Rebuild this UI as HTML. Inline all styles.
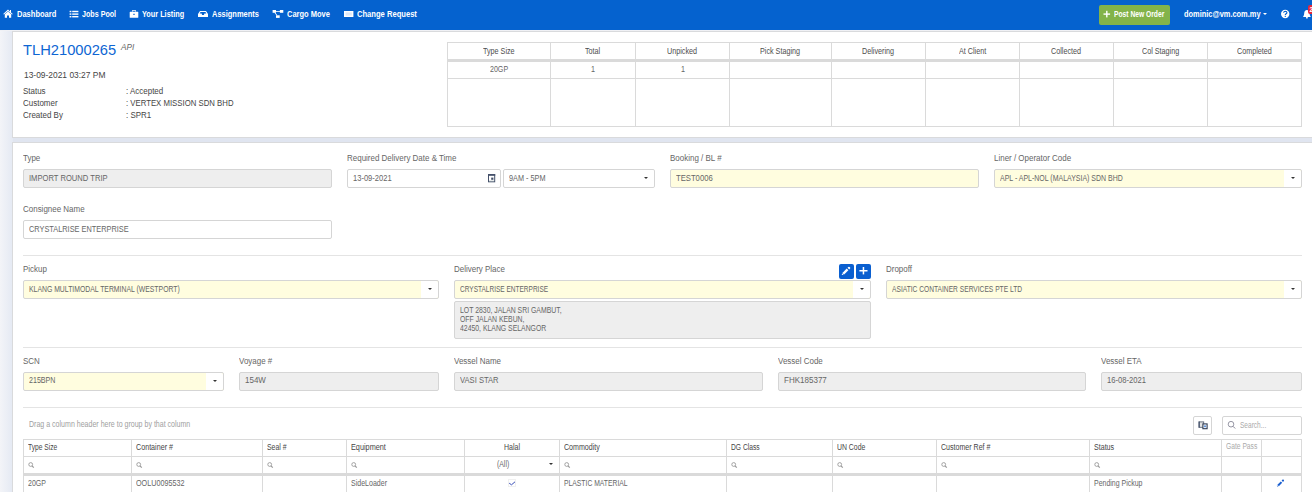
<!DOCTYPE html>
<html><head><meta charset="utf-8">
<style>
*{box-sizing:border-box;margin:0;padding:0}
html,body{width:1312px;height:492px;overflow:hidden}
body{position:relative;background:#e0e5f0;font-family:"Liberation Sans",sans-serif;color:#555}
.a{position:absolute}
.tx{position:absolute;white-space:nowrap;transform-origin:0 0}
.card{position:absolute;background:#fff;border:1px solid #d9dadc;border-right:none}
.inp{position:absolute;border:1px solid #d5d5d5;border-radius:2px;background:#fff;height:19px}
.dis{background:#eeeeee}
.yel{background:#fffddf}
.selbtn{position:absolute;right:0;top:0;width:17px;height:17px;background:#fff;border-radius:0 2px 2px 0}
.car{position:absolute;width:0;height:0;border-left:2px solid transparent;border-right:2px solid transparent;border-top:2px solid #333}
.hl{position:absolute;height:1px;background:#e4e4e4}
.vl{position:absolute;width:1px;background:#dadada}
</style></head><body>
<div class="a" style="left:0;top:31px;width:13px;height:461px;background:linear-gradient(90deg,#f3f4f8,#e4e9f3)"></div>
<div class="a" style="left:0;top:0;width:1312px;height:30px;background:#0562cf"></div>
<div class="a" style="left:0;top:30px;width:1312px;height:1px;background:#f0f1f5"></div>

<svg class="a" style="left:3px;top:9px" width="10" height="9" viewBox="0 0 10 9">
<path d="M5 0.6 L0.2 5 L1 5.6 L5 2 L9 5.6 L9.8 5 L8 3.4 L8 1 L7 1 L7 2.5 Z" fill="#fff"/>
<path d="M1.8 5.2 L5 2.4 L8.2 5.2 L8.2 8.8 L6 8.8 L6 6.4 L4 6.4 L4 8.8 L1.8 8.8 Z" fill="#fff"/>
</svg>
<svg class="a" style="left:69px;top:10px" width="10" height="8" viewBox="0 0 10 8">
<rect x="0.6" y="0.8" width="1.8" height="1.4" fill="#fff"/><rect x="3.2" y="0.8" width="6.2" height="1.4" fill="#fff"/>
<rect x="0.6" y="3.4" width="1.8" height="1.4" fill="#fff"/><rect x="3.2" y="3.4" width="6.2" height="1.4" fill="#fff"/>
<rect x="0.6" y="6" width="1.8" height="1.4" fill="#fff"/><rect x="3.2" y="6" width="6.2" height="1.4" fill="#fff"/>
</svg>
<svg class="a" style="left:129px;top:10px" width="10" height="8" viewBox="0 0 10 8">
<path d="M3 0.2 H7 V1.6 H6 V1 H4 V1.6 H3 Z" fill="#fff"/>
<rect x="0.7" y="1.8" width="8.6" height="6" rx="0.6" fill="#fff"/>
<rect x="4.2" y="3.8" width="1.6" height="1" fill="#0562cf"/>
</svg>
<svg class="a" style="left:197px;top:10px" width="12" height="8" viewBox="0 0 12 8">
<path d="M3 1 H9 L11 4 V7 H1 V4 Z" fill="#fff"/>
<path d="M3.5 2 H8.5 L9.3 3.5 H7.4 L6.9 4.9 H5.1 L4.6 3.5 H2.7 Z" fill="#0562cf"/>
</svg>
<svg class="a" style="left:272px;top:9px" width="12" height="10" viewBox="0 0 12 10">
<rect x="0.6" y="1" width="3.4" height="2.8" fill="#fff"/>
<rect x="7.9" y="1" width="3.4" height="2.8" fill="#fff"/>
<rect x="4" y="6.3" width="3.7" height="2.6" fill="#fff"/>
<path d="M4 2 H8 V2.8 H4 Z" fill="#fff"/>
<path d="M2.2 3.6 L4.6 6.6 L5.4 6.2 L3.2 3.4 Z" fill="#fff"/>
</svg>
<svg class="a" style="left:343px;top:10px" width="12" height="8" viewBox="0 0 12 8">
<rect x="1" y="1" width="9.4" height="6" fill="#fff"/>
<rect x="2.6" y="2.4" width="6.2" height="3.2" fill="#dfe9f8"/>
</svg>
<div class="tx" style="left:16.50px;top:10px;font-size:8.4px;line-height:8.4px;color:#fff;font-weight:700;transform:scaleX(0.8984);">Dashboard</div>
<div class="tx" style="left:82.00px;top:10px;font-size:8.4px;line-height:8.4px;color:#fff;font-weight:700;transform:scaleX(0.8521);">Jobs Pool</div>
<div class="tx" style="left:142.20px;top:10px;font-size:8.4px;line-height:8.4px;color:#fff;font-weight:700;transform:scaleX(0.8729);">Your Listing</div>
<div class="tx" style="left:212.00px;top:10px;font-size:8.4px;line-height:8.4px;color:#fff;font-weight:700;transform:scaleX(0.8918);">Assignments</div>
<div class="tx" style="left:287.10px;top:10px;font-size:8.4px;line-height:8.4px;color:#fff;font-weight:700;transform:scaleX(0.8950);">Cargo Move</div>
<div class="tx" style="left:357.30px;top:10px;font-size:8.4px;line-height:8.4px;color:#fff;font-weight:700;transform:scaleX(0.9065);">Change Request</div>
<div class="a" style="left:1099px;top:5px;width:71px;height:20px;background:#83b34a;border-radius:2px"></div>
<svg class="a" style="left:1103px;top:10px" width="8" height="8" viewBox="0 0 8 8"><rect x="3.1" y="0.8" width="1.4" height="6.6" fill="#fff"/><rect x="0.5" y="3.4" width="6.6" height="1.4" fill="#fff"/></svg>
<div class="tx" style="left:1114.30px;top:10px;font-size:8.4px;line-height:8.4px;color:#fff;font-weight:700;transform:scaleX(0.8006);">Post New Order</div>
<div class="tx" style="left:1183.50px;top:10px;font-size:8.4px;line-height:8.4px;color:#fff;font-weight:700;transform:scaleX(0.8859);">dominic@vm.com.my</div>
<div class="car" style="left:1262.5px;top:13px;border-left-width:2.2px;border-right-width:2.2px;border-top:2.2px solid #fff"></div>
<svg class="a" style="left:1280px;top:9px" width="11" height="11" viewBox="0 0 11 11"><circle cx="5.2" cy="5" r="4.2" fill="#fff"/><path d="M3.6 3.8 Q3.8 2.2 5.3 2.2 Q6.9 2.3 6.9 3.6 Q6.8 4.6 5.8 5 Q5.3 5.3 5.3 6" stroke="#0562cf" stroke-width="1.1" fill="none"/><rect x="4.7" y="6.8" width="1.2" height="1.1" fill="#0562cf"/></svg>
<svg class="a" style="left:1302px;top:9px" width="10" height="10" viewBox="0 0 10 10"><path d="M4.9 1 Q7.4 1.2 7.6 4.2 Q7.6 6.6 8.6 7.6 L8.6 8 H1.2 V7.6 Q2.2 6.6 2.2 4.2 Q2.4 1.2 4.9 1 Z" fill="#fff"/><circle cx="4.9" cy="8.7" r="0.9" fill="#fff"/></svg>
<div class="a" style="left:1307.5px;top:5px;width:7px;height:9px;background:#e3283c;border-radius:2px"></div>
<div class="tx" style="left:1309.5px;top:5.5px;font-size:6.5px;font-weight:700;color:#fff;line-height:8px">2</div>
<div class="card" style="left:12px;top:31px;width:1300px;height:107px"></div>
<div class="tx" style="left:22.90px;top:43px;font-size:14.6px;line-height:14.6px;color:#0e66d3;transform:scaleX(1.0076);">TLH21000265</div>
<div class="tx" style="left:121.20px;top:43px;font-size:8.5px;line-height:8.5px;color:#666;font-style:italic;transform:scaleX(0.9635);">API</div>
<div class="tx" style="left:23.60px;top:71px;font-size:8.4px;line-height:8.4px;color:#454545;transform:scaleX(1.0048);">13-09-2021 03:27 PM</div>
<div class="tx" style="left:23.20px;top:87px;font-size:8.4px;line-height:8.4px;color:#454545;transform:scaleX(0.9520);">Status</div>
<div class="tx" style="left:125.90px;top:87px;font-size:8.4px;line-height:8.4px;color:#454545;transform:scaleX(0.9520);">: Accepted</div>
<div class="tx" style="left:23.20px;top:99px;font-size:8.4px;line-height:8.4px;color:#454545;transform:scaleX(0.9520);">Customer</div>
<div class="tx" style="left:125.90px;top:99px;font-size:8.4px;line-height:8.4px;color:#454545;transform:scaleX(0.9290);">: VERTEX MISSION SDN BHD</div>
<div class="tx" style="left:23.20px;top:111px;font-size:8.4px;line-height:8.4px;color:#454545;transform:scaleX(0.9520);">Created By</div>
<div class="tx" style="left:125.90px;top:111px;font-size:8.4px;line-height:8.4px;color:#454545;transform:scaleX(0.9520);">: SPR1</div>
<div class="a" style="left:447px;top:42px;width:855px;height:85px;border:1px solid #dadada"></div>
<div class="vl" style="left:550px;top:42px;height:84px"></div>
<div class="vl" style="left:635px;top:42px;height:84px"></div>
<div class="vl" style="left:729px;top:42px;height:84px"></div>
<div class="vl" style="left:831px;top:42px;height:84px"></div>
<div class="vl" style="left:925px;top:42px;height:84px"></div>
<div class="vl" style="left:1019px;top:42px;height:84px"></div>
<div class="vl" style="left:1113px;top:42px;height:84px"></div>
<div class="vl" style="left:1207px;top:42px;height:84px"></div>
<div class="a" style="left:447px;top:59px;width:855px;height:3px;background:#dadada"></div>
<div class="a" style="left:447px;top:78px;width:855px;height:1px;background:#dadada"></div>
<div class="tx" style="left:483.19px;top:47px;font-size:8.4px;line-height:8.4px;color:#4d4d4d;transform:scaleX(0.8600);">Type Size</div>
<div class="tx" style="left:585.39px;top:47px;font-size:8.4px;line-height:8.4px;color:#4d4d4d;transform:scaleX(0.8600);">Total</div>
<div class="tx" style="left:667.49px;top:47px;font-size:8.4px;line-height:8.4px;color:#4d4d4d;transform:scaleX(0.8600);">Unpicked</div>
<div class="tx" style="left:760.48px;top:47px;font-size:8.4px;line-height:8.4px;color:#4d4d4d;transform:scaleX(0.8600);">Pick Staging</div>
<div class="tx" style="left:862.49px;top:47px;font-size:8.4px;line-height:8.4px;color:#4d4d4d;transform:scaleX(0.8600);">Delivering</div>
<div class="tx" style="left:958.89px;top:47px;font-size:8.4px;line-height:8.4px;color:#4d4d4d;transform:scaleX(0.8600);">At Client</div>
<div class="tx" style="left:1051.49px;top:47px;font-size:8.4px;line-height:8.4px;color:#4d4d4d;transform:scaleX(0.8600);">Collected</div>
<div class="tx" style="left:1141.88px;top:47px;font-size:8.4px;line-height:8.4px;color:#4d4d4d;transform:scaleX(0.8600);">Col Staging</div>
<div class="tx" style="left:1237.08px;top:47px;font-size:8.4px;line-height:8.4px;color:#4d4d4d;transform:scaleX(0.8600);">Completed</div>
<div class="tx" style="left:489.95px;top:65px;font-size:8.4px;line-height:8.4px;color:#666;transform:scaleX(0.8452);">20GP</div>
<div class="tx" style="left:591.00px;top:65px;font-size:8.4px;line-height:8.4px;color:#666;transform:scaleX(0.8600);">1</div>
<div class="tx" style="left:680.50px;top:65px;font-size:8.4px;line-height:8.4px;color:#666;transform:scaleX(0.8600);">1</div>
<div class="card" style="left:12px;top:142px;width:1300px;height:360px"></div>
<div class="tx" style="left:23.00px;top:154px;font-size:8.4px;line-height:8.4px;color:#666;transform:scaleX(0.9520);">Type</div>
<div class="inp dis" style="left:23px;top:169px;width:309px;height:19px"></div>
<div class="tx" style="left:29.00px;top:174px;font-size:8.4px;line-height:8.4px;color:#666;transform:scaleX(0.9084);">IMPORT ROUND TRIP</div>
<div class="tx" style="left:346.50px;top:154px;font-size:8.4px;line-height:8.4px;color:#666;transform:scaleX(0.9520);">Required Delivery Date &amp; Time</div>
<div class="inp " style="left:347px;top:169px;width:154px;height:19px"></div>
<div class="tx" style="left:353.00px;top:174px;font-size:8.4px;line-height:8.4px;color:#666;transform:scaleX(0.9010);">13-09-2021</div>
<svg class="a" style="left:487px;top:173px" width="9" height="10" viewBox="0 0 9 10"><rect x="1.5" y="1.6" width="6.2" height="7.2" fill="none" stroke="#44506a" stroke-width="1"/><rect x="1" y="1.1" width="7.2" height="1.7" fill="#44506a"/><rect x="4.2" y="4.6" width="2.2" height="2.2" fill="#44506a"/><rect x="2" y="7.6" width="5.2" height="0.8" fill="#9aa" opacity="0.6"/></svg>
<div class="inp " style="left:503px;top:169px;width:152px;height:19px"><div class="selbtn"><div class="car" style="left:6.5px;top:7px"></div></div></div>
<div class="tx" style="left:509.00px;top:174px;font-size:8.4px;line-height:8.4px;color:#666;transform:scaleX(0.8715);">9AM - 5PM</div>
<div class="tx" style="left:670.00px;top:154px;font-size:8.4px;line-height:8.4px;color:#666;transform:scaleX(0.9520);">Booking / BL #</div>
<div class="inp yel" style="left:670px;top:169px;width:309px;height:19px"></div>
<div class="tx" style="left:676.00px;top:174px;font-size:8.4px;line-height:8.4px;color:#666;transform:scaleX(0.9167);">TEST0006</div>
<div class="tx" style="left:993.50px;top:154px;font-size:8.4px;line-height:8.4px;color:#666;transform:scaleX(0.9520);">Liner / Operator Code</div>
<div class="inp yel" style="left:994px;top:169px;width:308px;height:19px"><div class="selbtn"><div class="car" style="left:6.5px;top:7px"></div></div></div>
<div class="tx" style="left:1000.00px;top:174px;font-size:8.4px;line-height:8.4px;color:#666;transform:scaleX(0.8341);">APL - APL-NOL (MALAYSIA) SDN BHD</div>
<div class="tx" style="left:23.00px;top:205px;font-size:8.4px;line-height:8.4px;color:#666;transform:scaleX(0.9520);">Consignee Name</div>
<div class="inp " style="left:23px;top:220px;width:309px;height:19px"></div>
<div class="tx" style="left:29.00px;top:225px;font-size:8.4px;line-height:8.4px;color:#666;transform:scaleX(0.8795);">CRYSTALRISE ENTERPRISE</div>
<div class="hl" style="left:23px;top:255px;width:1279px"></div>
<div class="tx" style="left:23.00px;top:265px;font-size:8.4px;line-height:8.4px;color:#666;transform:scaleX(0.9520);">Pickup</div>
<div class="inp yel" style="left:23px;top:280px;width:416px;height:19px"><div class="selbtn"><div class="car" style="left:6.5px;top:7px"></div></div></div>
<div class="tx" style="left:29.00px;top:285px;font-size:8.4px;line-height:8.4px;color:#666;transform:scaleX(0.8189);">KLANG MULTIMODAL TERMINAL (WESTPORT)</div>
<div class="tx" style="left:454.00px;top:265px;font-size:8.4px;line-height:8.4px;color:#666;transform:scaleX(0.9520);">Delivery Place</div>
<div class="a" style="left:839px;top:264px;width:15px;height:15px;background:#0a5fd0;border-radius:2px"></div>
<svg class="a" style="left:839px;top:264px" width="15" height="15" viewBox="0 0 15 15"><path d="M3.4 8.9 L5.1 10.6 L9.4 6.3 L7.7 4.6 Z" fill="#fff"/><path d="M3.1 9.3 L2.8 11 L4.6 10.8 Z" fill="#fff"/><path d="M8.5 3.8 L9.4 2.9 Q10 2.4 10.6 3 L11.1 3.5 Q11.6 4.1 11.1 4.6 L10.2 5.5 Z" fill="#fff"/></svg>
<div class="a" style="left:856px;top:264px;width:15px;height:15px;background:#0a5fd0;border-radius:2px"></div>
<svg class="a" style="left:856px;top:264px" width="15" height="15" viewBox="0 0 15 15"><rect x="6.7" y="3" width="1.5" height="7.4" fill="#fff"/><rect x="3.4" y="6" width="8.1" height="1.5" fill="#fff"/></svg>
<div class="inp yel" style="left:454px;top:280px;width:417px;height:19px"><div class="selbtn"><div class="car" style="left:6.5px;top:7px"></div></div></div>
<div class="tx" style="left:460.00px;top:285px;font-size:8.4px;line-height:8.4px;color:#666;transform:scaleX(0.7780);">CRYSTALRISE ENTERPRISE</div>
<div class="inp dis" style="left:454px;top:301px;width:417px;height:38px"></div>
<div class="tx" style="left:460.10px;top:306px;font-size:8.4px;line-height:8.4px;color:#666;transform:scaleX(0.8215);">LOT 2830, JALAN SRI GAMBUT,</div>
<div class="tx" style="left:460.10px;top:315px;font-size:8.4px;line-height:8.4px;color:#666;transform:scaleX(0.8200);">OFF JALAN KEBUN,</div>
<div class="tx" style="left:460.10px;top:324px;font-size:8.4px;line-height:8.4px;color:#666;transform:scaleX(0.8200);">42450, KLANG SELANGOR</div>
<div class="tx" style="left:886.00px;top:265px;font-size:8.4px;line-height:8.4px;color:#666;transform:scaleX(0.9520);">Dropoff</div>
<div class="inp yel" style="left:886px;top:280px;width:416px;height:19px"><div class="selbtn"><div class="car" style="left:6.5px;top:7px"></div></div></div>
<div class="tx" style="left:892.00px;top:285px;font-size:8.4px;line-height:8.4px;color:#666;transform:scaleX(0.7944);">ASIATIC CONTAINER SERVICES PTE LTD</div>
<div class="hl" style="left:23px;top:347px;width:1279px"></div>
<div class="tx" style="left:23.00px;top:357px;font-size:8.4px;line-height:8.4px;color:#666;transform:scaleX(0.9520);">SCN</div>
<div class="inp yel" style="left:23px;top:372px;width:201px;height:19px"><div class="selbtn"><div class="car" style="left:6.5px;top:7px"></div></div></div>
<div class="tx" style="left:29.00px;top:376px;font-size:8.4px;line-height:8.4px;color:#666;transform:scaleX(0.8495);">215BPN</div>
<div class="tx" style="left:239.00px;top:357px;font-size:8.4px;line-height:8.4px;color:#666;transform:scaleX(0.9520);">Voyage #</div>
<div class="inp dis" style="left:239px;top:372px;width:200px;height:19px"></div>
<div class="tx" style="left:245.00px;top:376px;font-size:8.4px;line-height:8.4px;color:#666;transform:scaleX(0.9553);">154W</div>
<div class="tx" style="left:454.00px;top:357px;font-size:8.4px;line-height:8.4px;color:#666;transform:scaleX(0.9520);">Vessel Name</div>
<div class="inp dis" style="left:454px;top:372px;width:309px;height:19px"></div>
<div class="tx" style="left:460.00px;top:376px;font-size:8.4px;line-height:8.4px;color:#666;transform:scaleX(0.9082);">VASI STAR</div>
<div class="tx" style="left:778.00px;top:357px;font-size:8.4px;line-height:8.4px;color:#666;transform:scaleX(0.9520);">Vessel Code</div>
<div class="inp dis" style="left:778px;top:372px;width:308px;height:19px"></div>
<div class="tx" style="left:784.00px;top:376px;font-size:8.4px;line-height:8.4px;color:#666;transform:scaleX(0.9576);">FHK185377</div>
<div class="tx" style="left:1101.00px;top:357px;font-size:8.4px;line-height:8.4px;color:#666;transform:scaleX(0.9520);">Vessel ETA</div>
<div class="inp dis" style="left:1101px;top:372px;width:201px;height:19px"></div>
<div class="tx" style="left:1107.00px;top:376px;font-size:8.4px;line-height:8.4px;color:#666;transform:scaleX(0.9080);">16-08-2021</div>
<div class="hl" style="left:23px;top:407px;width:1279px"></div>
<div class="tx" style="left:29.10px;top:420px;font-size:8.4px;line-height:8.4px;color:#a0a0a0;transform:scaleX(0.8409);">Drag a column header here to group by that column</div>
<div class="inp" style="left:1193px;top:416px;width:19px;height:19px"></div>
<svg class="a" style="left:1197px;top:420px" width="12" height="11" viewBox="0 0 12 11"><rect x="2.1" y="1.9" width="4.6" height="5.4" fill="#e4e4e4" stroke="#5b6577" stroke-width="0.9"/><rect x="1.6" y="1.5" width="1.1" height="6.2" fill="#3b4a66"/><rect x="5.9" y="3.9" width="4.2" height="4.8" fill="#fff" stroke="#2f3c55" stroke-width="1.1"/><rect x="7.2" y="5.4" width="1.6" height="1.8" fill="#3a7bd5"/></svg>
<div class="inp" style="left:1222px;top:416px;width:80px;height:19px"></div>
<svg class="a" style="left:1227px;top:420px" width="10" height="10" viewBox="0 0 10 10"><circle cx="4" cy="4.2" r="2.8" fill="none" stroke="#8a8a9a" stroke-width="0.9"/><path d="M6 6.3 L8.2 8.5" stroke="#8a8a9a" stroke-width="1"/></svg>
<div class="tx" style="left:1240.20px;top:421px;font-size:8.4px;line-height:8.4px;color:#aaa;transform:scaleX(0.7817);">Search...</div>
<div class="a" style="left:23px;top:439px;width:1279px;height:60px;border:1px solid #dadada"></div>
<div class="vl" style="left:131px;top:439px;height:60px"></div>
<div class="vl" style="left:262px;top:439px;height:60px"></div>
<div class="vl" style="left:346px;top:439px;height:60px"></div>
<div class="vl" style="left:464px;top:439px;height:60px"></div>
<div class="vl" style="left:559px;top:439px;height:60px"></div>
<div class="vl" style="left:726px;top:439px;height:60px"></div>
<div class="vl" style="left:832px;top:439px;height:60px"></div>
<div class="vl" style="left:936px;top:439px;height:60px"></div>
<div class="vl" style="left:1089px;top:439px;height:60px"></div>
<div class="vl" style="left:1221px;top:439px;height:60px"></div>
<div class="vl" style="left:1261px;top:439px;height:60px"></div>
<div class="a" style="left:23px;top:456px;width:1279px;height:1px;background:#dadada"></div>
<div class="a" style="left:23px;top:473px;width:1279px;height:3px;background:#dadada"></div>
<div class="tx" style="left:27.50px;top:443px;font-size:8.4px;line-height:8.4px;color:#454545;transform:scaleX(0.7940);">Type Size</div>
<svg class="a" style="left:28px;top:462px" width="7" height="7" viewBox="0 0 7 7"><circle cx="2.7" cy="2.5" r="1.9" fill="none" stroke="#9a9a9a" stroke-width="0.9"/><path d="M4.1 4 L5.8 5.7" stroke="#9a9a9a" stroke-width="1.1"/></svg>
<div class="tx" style="left:135.50px;top:443px;font-size:8.4px;line-height:8.4px;color:#454545;transform:scaleX(0.8545);">Container #</div>
<svg class="a" style="left:136px;top:462px" width="7" height="7" viewBox="0 0 7 7"><circle cx="2.7" cy="2.5" r="1.9" fill="none" stroke="#9a9a9a" stroke-width="0.9"/><path d="M4.1 4 L5.8 5.7" stroke="#9a9a9a" stroke-width="1.1"/></svg>
<div class="tx" style="left:266.50px;top:443px;font-size:8.4px;line-height:8.4px;color:#454545;transform:scaleX(0.8254);">Seal #</div>
<svg class="a" style="left:267px;top:462px" width="7" height="7" viewBox="0 0 7 7"><circle cx="2.7" cy="2.5" r="1.9" fill="none" stroke="#9a9a9a" stroke-width="0.9"/><path d="M4.1 4 L5.8 5.7" stroke="#9a9a9a" stroke-width="1.1"/></svg>
<div class="tx" style="left:350.50px;top:443px;font-size:8.4px;line-height:8.4px;color:#454545;transform:scaleX(0.8700);">Equipment</div>
<svg class="a" style="left:351px;top:462px" width="7" height="7" viewBox="0 0 7 7"><circle cx="2.7" cy="2.5" r="1.9" fill="none" stroke="#9a9a9a" stroke-width="0.9"/><path d="M4.1 4 L5.8 5.7" stroke="#9a9a9a" stroke-width="1.1"/></svg>
<div class="tx" style="left:504.00px;top:443px;font-size:8.4px;line-height:8.4px;color:#454545;transform:scaleX(0.8384);">Halal</div>
<div class="tx" style="left:563.50px;top:443px;font-size:8.4px;line-height:8.4px;color:#454545;transform:scaleX(0.8453);">Commodity</div>
<svg class="a" style="left:564px;top:462px" width="7" height="7" viewBox="0 0 7 7"><circle cx="2.7" cy="2.5" r="1.9" fill="none" stroke="#9a9a9a" stroke-width="0.9"/><path d="M4.1 4 L5.8 5.7" stroke="#9a9a9a" stroke-width="1.1"/></svg>
<div class="tx" style="left:730.50px;top:443px;font-size:8.4px;line-height:8.4px;color:#454545;transform:scaleX(0.8010);">DG Class</div>
<svg class="a" style="left:731px;top:462px" width="7" height="7" viewBox="0 0 7 7"><circle cx="2.7" cy="2.5" r="1.9" fill="none" stroke="#9a9a9a" stroke-width="0.9"/><path d="M4.1 4 L5.8 5.7" stroke="#9a9a9a" stroke-width="1.1"/></svg>
<div class="tx" style="left:836.50px;top:443px;font-size:8.4px;line-height:8.4px;color:#454545;transform:scaleX(0.8216);">UN Code</div>
<svg class="a" style="left:837px;top:462px" width="7" height="7" viewBox="0 0 7 7"><circle cx="2.7" cy="2.5" r="1.9" fill="none" stroke="#9a9a9a" stroke-width="0.9"/><path d="M4.1 4 L5.8 5.7" stroke="#9a9a9a" stroke-width="1.1"/></svg>
<div class="tx" style="left:940.50px;top:443px;font-size:8.4px;line-height:8.4px;color:#454545;transform:scaleX(0.8424);">Customer Ref #</div>
<svg class="a" style="left:941px;top:462px" width="7" height="7" viewBox="0 0 7 7"><circle cx="2.7" cy="2.5" r="1.9" fill="none" stroke="#9a9a9a" stroke-width="0.9"/><path d="M4.1 4 L5.8 5.7" stroke="#9a9a9a" stroke-width="1.1"/></svg>
<div class="tx" style="left:1093.50px;top:443px;font-size:8.4px;line-height:8.4px;color:#454545;transform:scaleX(0.8466);">Status</div>
<svg class="a" style="left:1094px;top:462px" width="7" height="7" viewBox="0 0 7 7"><circle cx="2.7" cy="2.5" r="1.9" fill="none" stroke="#9a9a9a" stroke-width="0.9"/><path d="M4.1 4 L5.8 5.7" stroke="#9a9a9a" stroke-width="1.1"/></svg>
<div class="tx" style="left:1225.50px;top:442px;font-size:8.4px;line-height:8.4px;color:#aaa;transform:scaleX(0.8005);">Gate Pass</div>
<div class="tx" style="left:497.20px;top:460px;font-size:8.4px;line-height:8.4px;color:#666;transform:scaleX(0.8196);">(All)</div>
<div class="car" style="left:548.5px;top:463px"></div>
<div class="tx" style="left:27.50px;top:479px;font-size:8.4px;line-height:8.4px;color:#666;transform:scaleX(0.8400);">20GP</div>
<div class="tx" style="left:135.50px;top:479px;font-size:8.4px;line-height:8.4px;color:#666;transform:scaleX(0.8609);">OOLU0095532</div>
<div class="tx" style="left:350.50px;top:479px;font-size:8.4px;line-height:8.4px;color:#666;transform:scaleX(0.8400);">SideLoader</div>
<div class="a" style="left:508px;top:479px;width:8px;height:8px;border:1px solid #f0f0f0"></div><svg class="a" style="left:508px;top:480px" width="8" height="7" viewBox="0 0 8 7"><path d="M1.2 3.2 L3.5 4.8 L7 1.8" fill="none" stroke="#3a4fb8" stroke-width="1"/></svg>
<div class="tx" style="left:563.80px;top:479px;font-size:8.4px;line-height:8.4px;color:#666;transform:scaleX(0.8103);">PLASTIC MATERIAL</div>
<div class="tx" style="left:1093.70px;top:479px;font-size:8.4px;line-height:8.4px;color:#666;transform:scaleX(0.8333);">Pending Pickup</div>
<svg class="a" style="left:1276px;top:478px" width="10" height="10" viewBox="0 0 10 10"><path d="M1.4 6.8 L2.8 8.2 L6.2 4.8 L4.8 3.4 Z" fill="#1a5fd0"/><path d="M0.9 7.2 L1.1 8.6 L2.4 8.4 Z" fill="#1a5fd0"/><path d="M5.6 2.6 L6.6 1.6 Q7.2 1.2 7.8 1.8 Q8.3 2.4 7.9 3 L7 4 Z" fill="#1a5fd0"/></svg>
</body></html>
